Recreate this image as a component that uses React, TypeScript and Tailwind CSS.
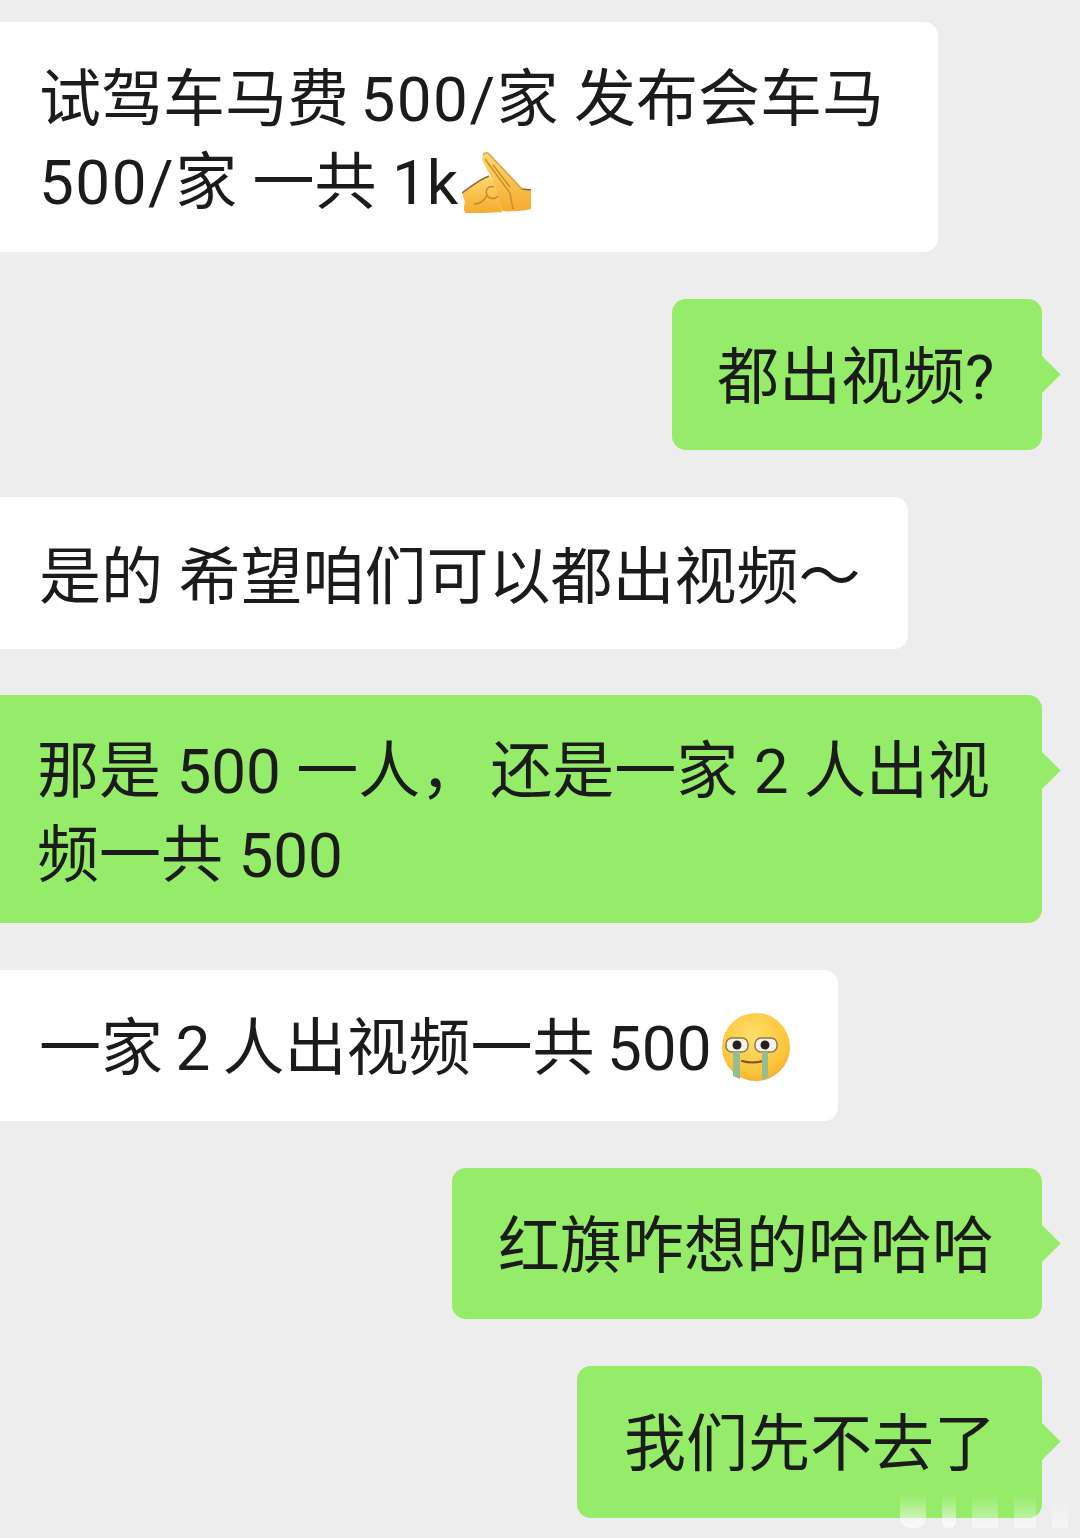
import React from "react";

const fontStack = "font-['Roboto','Noto_Sans_CJK_SC',sans-serif]";

function PressedHands() {
  return (
    <svg viewBox="0 0 70 62" className="w-[70px] h-[62px] shrink-0 ml-[4px] mb-[2px]" aria-hidden="true">
      <defs>
        <linearGradient id="hand" x1="0" y1="0" x2="0" y2="1">
          <stop offset="0" stopColor="#ffd870" />
          <stop offset="1" stopColor="#f4ab2e" />
        </linearGradient>
      </defs>
      {/* upright hand, seen from the side */}
      <path d="M21 4c2-3 5-3 7 0l32 34 9 1v19c-8 2-22 3-29 2L30 28 20 9z" fill="url(#hand)" />
      {/* left hand, curled */}
      <path d="M0 42c8-6 17-13 27-17l6 8 7 28c-12 1-27 1-36 1-3-2-2-7-1-11z" fill="url(#hand)" />
      <path d="M0 42c8-6 17-13 27-17" fill="none" stroke="#8f6a32" strokeWidth="1.5" />
      <path d="M60 38l9 1" fill="none" stroke="#8f6a32" strokeWidth="1.5" />
      <path d="M21 4c2-3 5-3 7 0l32 34" fill="none" stroke="#d8a046" strokeWidth="1.5" />
      <path d="M23 8l25 34 3 16M31 14l17 22" fill="none" stroke="#cc8f2e" strokeWidth="1.5" />
      <path d="M32 36c-6-2-9 3-7 8 2 4 8 5 11 1M25 44c-2 6-8 9-13 9" fill="none" stroke="#c68a2c" strokeWidth="1.5" />
    </svg>
  );
}

function CryingFace() {
  return (
    <svg viewBox="0 0 70 70" className="w-[70px] h-[70px] shrink-0 ml-[9px] mb-[4px]" aria-hidden="true">
      <defs>
        <radialGradient id="face" cx="0.45" cy="0.35" r="0.75">
          <stop offset="0" stopColor="#ffe06a" />
          <stop offset="0.7" stopColor="#fbc43a" />
          <stop offset="1" stopColor="#eda428" />
        </radialGradient>
      </defs>
      <circle cx="35" cy="35" r="34" fill="url(#face)" />
      <rect x="5" y="26" width="22" height="14" rx="6" fill="#f6f3ea" stroke="#8f7a4a" strokeWidth="1.5" />
      <rect x="34" y="26" width="22" height="14" rx="6" fill="#f6f3ea" stroke="#8f7a4a" strokeWidth="1.5" />
      <circle cx="16" cy="33" r="4.5" fill="#23201c" />
      <circle cx="44" cy="33" r="4.5" fill="#23201c" />
      <path d="M21 49c7 2 14 2 21 0" fill="none" stroke="#7a5520" strokeWidth="2" strokeLinecap="round" />
      <path d="M12 40h7v27l-7-3z" fill="#93bd93" />
      <path d="M41 40h6v25l-6 3z" fill="#93bd93" />
    </svg>
  );
}

interface BubbleProps {
  mine?: boolean;
  className: string;
  children: React.ReactNode;
}

function Bubble({ mine = false, className, children }: BubbleProps) {
  return (
    <div
      className={`relative rounded-[14px] text-[62px] text-[#1b1b1b] whitespace-nowrap ${
        mine ? "self-end mr-[38px] bg-[#95ec69]" : "self-start rounded-l-none bg-white"
      } ${className}`}
    >
      {mine && (
        <div className="absolute right-[-13px] top-[62px] w-[27px] h-[27px] rotate-45 bg-[#95ec69]" />
      )}
      <div className="relative leading-[85px]">{children}</div>
    </div>
  );
}

export default function App() {
  return (
    <div className={`relative w-[1080px] h-[1538px] overflow-hidden bg-[#ededed] ${fontStack}`}>
      <div className="flex flex-col gap-[47px] pt-[22px]">
        <Bubble className="w-[938px] h-[230px] pl-[39px] pt-[36px]">
          <div className="leading-[83px]">
            试驾车马费<span className="ml-[-4px]"> </span>
            <span className="tracking-[1.5px]">500/</span>家 发布会车马
          </div>
          <div className="flex items-center leading-[83px]">
            <span className="tracking-[1.5px]">500/</span>
            <span className="whitespace-pre">家 一共 1k</span>
            <PressedHands />
          </div>
        </Bubble>

        <Bubble mine className="w-[370px] h-[151px] pl-[45px] pt-[36px]">
          都出视频?
        </Bubble>

        <Bubble className="w-[908px] h-[152px] mb-[-1px] pl-[39px] pt-[38px]">
          是的 希望咱们可以都出视频{"\uFF5E"}
        </Bubble>

        <Bubble mine className="w-[1042px] rounded-l-none h-[228px] pl-[37px] pt-[35px]">
          <div className="leading-[84px]">
            那是 500 一人<span className="mr-[8px]">{"\uFF0C"}</span>还是一家 2 人出视
          </div>
          <div className="leading-[84px]">频一共 500</div>
        </Bubble>

        <Bubble className="w-[838px] h-[151px] pl-[39px] pt-[36px]">
          <div className="flex items-center [word-spacing:-3px]">
            <span className="whitespace-pre">一家 2 人出视频一共 500</span>
            <CryingFace />
          </div>
        </Bubble>

        <Bubble mine className="w-[590px] h-[151px] pl-[46px] pt-[36px]">
          红旗咋想的哈哈哈
        </Bubble>

        <Bubble mine className="w-[465px] h-[152px] pl-[47px] pt-[36px]">
          我们先不去了
        </Bubble>
      </div>

      {/* faint watermark smear at the bottom corner */}
      <div className="absolute left-[900px] top-[1494px] flex gap-[16px]">
        <div className="w-[26px] h-[34px] rounded-b-[10px] bg-gradient-to-b from-transparent to-white/70" />
        <div className="w-[14px] h-[34px] rounded-b-[6px] bg-gradient-to-b from-transparent to-white/70" />
        <div className="w-[26px] h-[34px] bg-gradient-to-b from-transparent to-white/50" />
        <div className="w-[22px] h-[34px] bg-gradient-to-b from-transparent to-white/50" />
        <div className="w-[16px] h-[34px] bg-gradient-to-b from-transparent to-white/40" />
      </div>
    </div>
  );
}
